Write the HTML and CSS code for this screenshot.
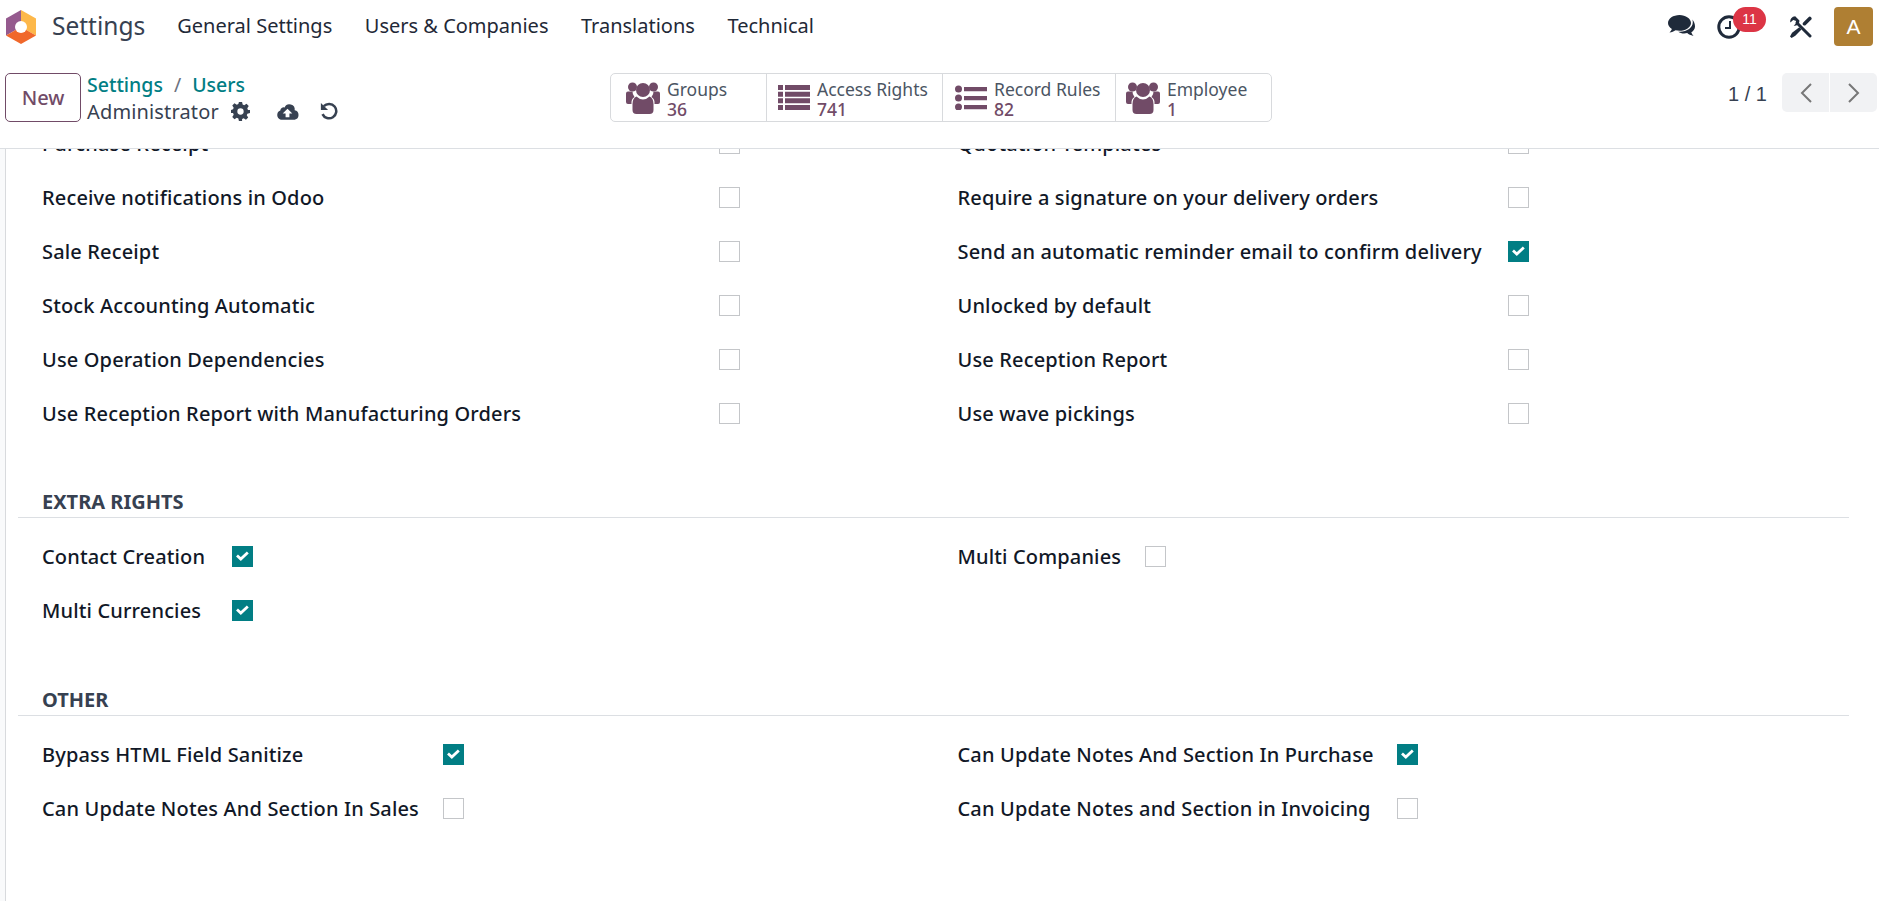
FILE: index.html
```html
<!DOCTYPE html>
<html lang="en">
<head>
    <meta charset="UTF-8">
    <meta name="viewport" content="width=device-width, initial-scale=1.0">
    <title>Settings - Administrator</title>
    <link rel="stylesheet" href="styles.css">
</head>
<body>
    <nav class="navbar">
        <svg class="logo" viewBox="0 0 30 34">
            <path fill="#955a8e" d="M15 0 0 8.500v17L15 17z"/>
            <path fill="#fdb84a" d="M15 0l15 8.500v17L15 17z"/>
            <path fill="#f0682b" d="M0 25.500 15 17l15 8.500L15 34z"/>
            <circle cx="15" cy="17" r="6" fill="#fff"/>
        </svg>
        <span class="app-name">Settings</span>
        <a class="menu-item">General Settings</a>
        <a class="menu-item">Users &amp; Companies</a>
        <a class="menu-item">Translations</a>
        <a class="menu-item">Technical</a>
        <div class="systray">
            <svg class="tray-chat" viewBox="0 0 28 23"><path fill="#1f2a3a" d="M11.500 0C5.200 0 0 3.600 0 8c0 2.400 1.500 4.500 3.900 6-.4 1.300-1.200 2.400-2.400 3.500 2.300-.2 4.400-1 6-2.200 1.300.3 2.600.5 4 .5 6.300 0 11.500-3.500 11.500-7.800S17.800 0 11.500 0z"/><path fill="#1f2a3a" d="M24.300 4.500c.3.900.5 1.700.5 2.700 0 5.300-5.700 9.300-12.800 9.600-.6 0-1.200 0-1.800-.1 1.600 1.100 3.700 1.800 6 1.800 1 0 2-.1 3-.4 1.500 1.300 3.300 2.200 6.300 2.900-1-1.200-1.800-2.400-2.200-3.800 2.200-1.400 3.700-3.500 3.700-5.800 0-2.700-1-5-2.700-6.900z"/></svg>
            <span class="tray-clock">
                <svg viewBox="0 0 24 24"><circle cx="12" cy="12" r="10.200" fill="none" stroke="#1f2a3a" stroke-width="3"/><path fill="none" stroke="#1f2a3a" stroke-width="2" d="M13 6v7H8"/></svg>
                <span class="badge">11</span>
            </span>
            <svg class="tray-tools" viewBox="0 0 22 22">
                <path fill="#1f2a3a" d="M5.200.3A5 5 0 0 0 .4 6.600l2.800-2.600 2.500.7.700 2.400-2.700 2.700a5 5 0 0 0 5.700-5.300z"/>
                <path fill="none" stroke="#1f2a3a" stroke-width="3" stroke-linecap="round" d="M7 7l13 13"/>
                <path fill="none" stroke="#1f2a3a" stroke-width="3.600" stroke-linecap="round" d="M19.800 2.400l-5.300 5.300"/>
                <path fill="#1f2a3a" d="M9.300 11.300l2.200 2.200-6.200 6.300L1.600 22 0 20.400l2.100-3.700z"/>
            </svg>
            <span class="avatar">A</span>
        </div>
    </nav>

    <header class="control-panel">
        <button class="btn-new">New</button>
        <div class="titles">
            <div class="crumbs"><a>Settings</a><span class="sep">/</span><a>Users</a></div>
            <div class="record">
                <span class="record-name">Administrator</span>
                <svg class="ic-gear" viewBox="0 0 24 24"><path fill="#374151" fill-rule="evenodd" d="M10 0h4l.7 3.300 2 .8L19.600 2.300l2.800 2.800-1.800 2.900.8 2L24 10v4l-3.300.7-.8 2 1.800 2.900-2.800 2.800-2.900-1.800-2 .8L14 24h-4l-.7-3.300-2-.8-2.900 1.800-2.800-2.800L3.400 16l-.8-2L0 14v-4l2.600-.7.8-2-1.800-2.900 2.800-2.800 2.900 1.800 2-.8zM12 8a4 4 0 1 0 0 8 4 4 0 0 0 0-8z"/></svg>
                <svg class="ic-cloud" viewBox="0 0 24 17"><path fill="#374151" fill-rule="evenodd" d="M19.500 7.200A5.500 5.500 0 0 0 9 4.300 3.500 3.500 0 0 0 4.500 7.500 5 5 0 0 0 5 17h14.500a5 5 0 0 0 0-9.800zM12 5.500l5 5h-3v4h-4v-4H7z"/></svg>
                <svg class="ic-undo" viewBox="0 0 20 20"><path fill="none" stroke="#374151" stroke-width="2.800" d="M4.200 4.700a8 8 0 1 1-1.400 8.800"/><path fill="#374151" d="M1 1l8 8H1z"/></svg>
            </div>
        </div>
        <div class="stats">
            <div class="stat stat-groups">
                <svg class="ic-users" viewBox="0 0 34 33"><use href="#users"/></svg>
                <div class="stat-text"><span>Groups</span><b>36</b></div>
            </div>
            <div class="stat stat-access">
                <svg class="ic-list" viewBox="0 0 32 25"><path fill="#714b67" d="M0 0h5v5H0zM7 0h25v5H7zM0 6.700h5v5H0zM7 6.700h25v5H7zM0 13.300h5v5H0zM7 13.300h25v5H7zM0 20h5v5H0zM7 20h25v5H7z"/></svg>
                <div class="stat-text"><span>Access Rights</span><b>741</b></div>
            </div>
            <div class="stat stat-rules">
                <svg class="ic-list" viewBox="0 0 32 25"><path fill="#714b67" d="M9 2h23v4.300H9zM9 11h23v4.300H9zM9 20h23v4.300H9z"/><circle cx="3.500" cy="4" r="3.500" fill="#714b67"/><circle cx="3.500" cy="13" r="3.500" fill="#714b67"/><circle cx="3.500" cy="22" r="3.500" fill="#714b67"/></svg>
                <div class="stat-text"><span>Record Rules</span><b>82</b></div>
            </div>
            <div class="stat stat-employee">
                <svg class="ic-users" viewBox="0 0 34 33"><use href="#users"/></svg>
                <div class="stat-text"><span>Employee</span><b>1</b></div>
            </div>
        </div>
        <div class="pager">
            <span class="pager-count">1 / 1</span>
            <div class="pager-btns">
                <button><svg viewBox="0 0 12 20"><path fill="none" stroke="#777" stroke-width="2" d="M11 1 2 10l9 9"/></svg></button>
                <button><svg viewBox="0 0 12 20"><path fill="none" stroke="#777" stroke-width="2" d="M1 1l9 9-9 9"/></svg></button>
            </div>
        </div>
    </header>

    <svg class="defs" width="0" height="0">
        <symbol id="users" viewBox="0 0 34 33">
            <circle cx="6.500" cy="6" r="4.500" fill="#714b67"/>
            <circle cx="27.500" cy="6" r="4.500" fill="#714b67"/>
            <path fill="#714b67" d="M0 12.500q0-2 2-2h4.500a8 8 0 0 0 2 5.500Q5 18 5.500 23H2q-2 0-2-2zM34 12.500q0-2-2-2h-4.500a8 8 0 0 1-2 5.500q3.500 2 3 7H32q2 0 2-2z"/>
            <circle cx="17" cy="9" r="7" fill="#714b67"/>
            <path fill="#714b67" d="M10.500 15.500q3 3 6.500 3t6.500-3q4 1.500 4 7.500v6q0 4-4 4h-13q-4 0-4-4v-6q0-6 4-7.500z"/>
        </symbol>
        <symbol id="check" viewBox="0 0 13 10">
            <path fill="none" stroke="#fff" stroke-width="2.800" d="M1 4.500l3.800 3.500 7-6.500"/>
        </symbol>
    </svg>

    <main class="content">
        <div class="sheet">
            <section class="fields fields-top">
                <div class="group group-wide">
                    <label>Purchase Receipt</label><span class="cb"></span>
                    <label>Receive notifications in Odoo</label><span class="cb"></span>
                    <label>Sale Receipt</label><span class="cb"></span>
                    <label>Stock Accounting Automatic</label><span class="cb"></span>
                    <label>Use Operation Dependencies</label><span class="cb"></span>
                    <label>Use Reception Report with Manufacturing Orders</label><span class="cb"></span>
                </div>
                <div class="group group-reminder">
                    <label>Quotation Templates</label><span class="cb"></span>
                    <label>Require a signature on your delivery orders</label><span class="cb"></span>
                    <label>Send an automatic reminder email to confirm delivery</label><span class="cb on"><svg viewBox="0 0 13 10"><use href="#check"/></svg></span>
                    <label>Unlocked by default</label><span class="cb"></span>
                    <label>Use Reception Report</label><span class="cb"></span>
                    <label>Use wave pickings</label><span class="cb"></span>
                </div>
            </section>

            <h3 class="section-title">EXTRA RIGHTS</h3>
            <section class="fields">
                <div class="group group-contact">
                    <label>Contact Creation</label><span class="cb on"><svg viewBox="0 0 13 10"><use href="#check"/></svg></span>
                    <label>Multi Currencies</label><span class="cb on"><svg viewBox="0 0 13 10"><use href="#check"/></svg></span>
                </div>
                <div class="group group-multi">
                    <label>Multi Companies</label><span class="cb"></span>
                </div>
            </section>

            <h3 class="section-title section-other">OTHER</h3>
            <section class="fields">
                <div class="group group-bypass">
                    <label>Bypass HTML Field Sanitize</label><span class="cb on"><svg viewBox="0 0 13 10"><use href="#check"/></svg></span>
                    <label>Can Update Notes And Section In Sales</label><span class="cb"></span>
                </div>
                <div class="group group-notes">
                    <label>Can Update Notes And Section In Purchase</label><span class="cb on"><svg viewBox="0 0 13 10"><use href="#check"/></svg></span>
                    <label>Can Update Notes and Section in Invoicing</label><span class="cb"></span>
                </div>
            </section>
        </div>
    </main>
</body>
</html>
```

FILE: styles.css
```css
* {
    box-sizing: border-box;
}
html, body {
    height: 100%;
}
body {
    margin: 0;
    overflow: hidden;
    background: #fff;
    color: #1f2937;
    font-family: "Noto Sans", Arial, sans-serif;
    font-size: 20px;
}
button {
    font-family: inherit;
}

/* top bar */
.navbar {
    display: flex;
    align-items: center;
    height: 54px;
    padding-left: 6px;
    padding-bottom: 1px;
}
.logo {
    width: 30px;
    height: 34px;
}
.app-name {
    margin-left: 16px;
    margin-right: 32px;
    margin-top: -3px;
    font-size: 24.500px;
    color: #374151;
}
.menu-item {
    margin-right: 32.500px;
    margin-top: -3px;
    font-size: 20px;
    color: #1f2937;
}
.systray {
    display: flex;
    align-items: center;
    margin-left: auto;
    padding-right: 6px;
}
.tray-chat {
    width: 28px;
    height: 23px;
}
.tray-clock {
    position: relative;
    display: block;
    width: 24px;
    height: 24px;
    margin-left: 21px;
}
.tray-clock svg {
    display: block;
}
.badge {
    position: absolute;
    top: -8px;
    left: 16px;
    width: 33px;
    height: 25px;
    border-radius: 13px;
    background: #dc3545;
    color: #fff;
    font-family: "Liberation Sans", Arial, sans-serif;
    font-size: 14px;
    line-height: 25px;
    text-align: center;
}
.tray-tools {
    width: 22px;
    height: 22px;
    margin-left: 49px;
}
.avatar {
    display: block;
    width: 39px;
    height: 39px;
    margin-left: 22px;
    border-radius: 4px;
    background: #af7f33;
    color: #fff;
    font-family: "Liberation Sans", Arial, sans-serif;
    font-size: 21px;
    line-height: 39px;
    text-align: center;
}

/* control panel */
.control-panel {
    display: flex;
    align-items: flex-start;
    height: 95px;
    padding: 19px 2px 0 5px;
    border-bottom: 1px solid #dcdfe3;
}
.btn-new {
    width: 76px;
    height: 49px;
    padding: 0;
    border: 1px solid #714b67;
    border-radius: 5px;
    background: #fff;
    color: #714b67;
    font-size: 20px;
    font-weight: 500;
}
.titles {
    width: 523px;
    margin-left: 6px;
    margin-top: -1px;
}
.crumbs {
    height: 26px;
    line-height: 26px;
    font-size: 19.500px;
    color: #017e84;
    font-weight: 500;
}
.crumbs .sep {
    margin: 0 11px;
    color: #6b7280;
    font-weight: 400;
}
.record {
    display: flex;
    align-items: center;
    height: 26px;
    color: #374151;
}
.record-name {
    letter-spacing: 0.15px;
}
.ic-gear {
    width: 19px;
    height: 19px;
    margin-left: 12px;
}
.ic-cloud {
    width: 23px;
    height: 17px;
    margin-left: 26px;
}
.ic-undo {
    width: 18px;
    height: 18px;
    margin-left: 21px;
}
.stats {
    display: flex;
    height: 49px;
    border: 1px solid #d8dadd;
    border-radius: 5px;
}
.stat {
    display: flex;
    align-items: center;
    padding-left: 15px;
    border-right: 1px solid #d8dadd;
}
.stat:last-child {
    border-right: none;
}
.stat-groups {
    width: 156px;
}
.stat-access {
    width: 176px;
    padding-left: 11px;
}
.stat-rules {
    width: 173px;
    padding-left: 12px;
}
.stat-employee {
    width: 155px;
    padding-left: 10px;
}
.ic-users {
    flex: none;
    width: 34px;
    height: 33px;
}
.ic-list {
    flex: none;
    width: 32px;
    height: 25px;
}
.stat-text {
    display: flex;
    flex-direction: column;
    margin-left: 7px;
    margin-top: 2px;
    font-size: 17.500px;
    line-height: 20px;
    color: #4b5563;
}
.stat-text b {
    font-weight: 500;
    color: #714b67;
}
.pager {
    display: flex;
    align-items: flex-start;
    margin-left: auto;
}
.pager-count {
    margin-right: 15px;
    font-family: "Liberation Sans", Arial, sans-serif;
    font-size: 20px;
    line-height: 43px;
    color: #374151;
}
.pager-btns {
    display: flex;
    gap: 1px;
}
.pager-btns button {
    display: flex;
    align-items: center;
    justify-content: center;
    width: 47px;
    height: 39px;
    padding: 0;
    border: none;
    background: #f1f2f4;
}
.pager-btns button:first-child {
    border-radius: 5px 0 0 5px;
}
.pager-btns button:last-child {
    border-radius: 0 5px 5px 0;
}
.pager-btns svg {
    width: 12px;
    height: 20px;
}

/* form sheet */
.content {
    height: 752px;
    overflow: hidden;
    padding-left: 5px;
    background: #f9fafb;
}
.sheet {
    display: flow-root;
    height: 100%;
    border-left: 1px solid #d8dadd;
    background: #fff;
    padding: 0 30px 0 12px;
}
.fields {
    display: grid;
    grid-template-columns: 915.500px 1fr;
    padding-left: 24px;
}
.fields-top {
    margin-top: -33px;
}
.group {
    display: grid;
    grid-auto-rows: 54px;
    align-items: center;
    justify-content: start;
}
.group-wide {
    grid-template-columns: 677px 21px;
}
.group-reminder {
    grid-template-columns: 550px 21px;
}
.group-contact {
    grid-template-columns: 190px 21px;
}
.group-multi {
    grid-template-columns: 187px 21px;
}
.group-bypass {
    grid-template-columns: 400.500px 21px;
}
.group-notes {
    grid-template-columns: 439px 21px;
}
.group label {
    font-size: 20px;
    font-weight: 500;
    letter-spacing: 0.15px;
    color: #111827;
}
.cb {
    display: flex;
    align-items: center;
    justify-content: center;
    width: 21px;
    height: 21px;
    border: 1px solid #c4c6c9;
    background: #fff;
}
.cb.on {
    border-color: #017e84;
    background: #017e84;
}
.cb svg {
    width: 13px;
    height: 10px;
}
.section-title {
    height: 33px;
    margin: 45px 0 11px;
    padding: 3px 0 0 24px;
    border-bottom: 1px solid #dcdfe3;
    font-size: 20px;
    line-height: 28px;
    font-weight: 700;
    color: #374151;
}
.section-other {
    margin-top: 46px;
}
.defs {
    position: absolute;
}
```
